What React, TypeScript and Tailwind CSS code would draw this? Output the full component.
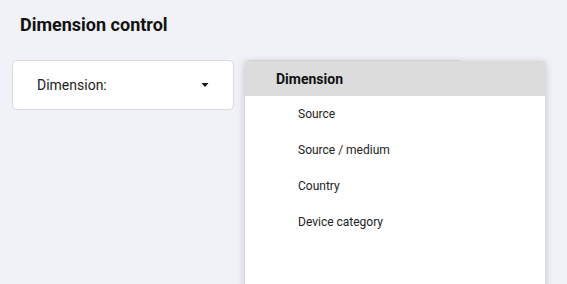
import React from "react";

export default function App() {
  const items = ["Source", "Source / medium", "Country", "Device category"];
  return (
    <div
      className="w-[567px] h-[284px] overflow-hidden bg-[#f1f2f7] relative"
      style={{ fontFamily: "Roboto, 'Liberation Sans', sans-serif" }}
    >
      <div className="pl-5 pt-[13px] text-[18px] leading-[24px] font-bold text-[#111]">
        Dimension control
      </div>
      <div className="flex gap-[11px] pl-3 pt-[23px]">
        <div className="w-[222px] h-[50px] bg-white rounded-[5px] border border-[#dadce0] flex items-center pl-6 pr-6 justify-between">
          <span className="text-[14px] text-[#222]">Dimension:</span>
          <svg width="8" height="4" viewBox="0 0 8 4">
            <path d="M0.5 0 L7.5 0 L4 4 Z" fill="#111" />
          </svg>
        </div>
        <div className="relative w-[219px] h-[50px] bg-white rounded-[5px] border border-[#dadce0]">
          <div className="absolute left-[-1px] top-0 w-[300px] h-[240px] bg-white shadow-[0_2px_8px_rgba(0,0,0,0.22)]">
            <div className="h-[35px] bg-[#dcdcdc] flex items-center pt-[2px] pl-[31px] text-[14px] font-bold text-[#111]">
              Dimension
            </div>
            <div className="flex flex-col pt-0">
              {items.map((t) => (
                <div key={t} className="h-[36px] flex items-center pl-[53px] text-[12px] text-[#222]">
                  {t}
                </div>
              ))}
            </div>
          </div>
        </div>
      </div>
    </div>
  );
}
